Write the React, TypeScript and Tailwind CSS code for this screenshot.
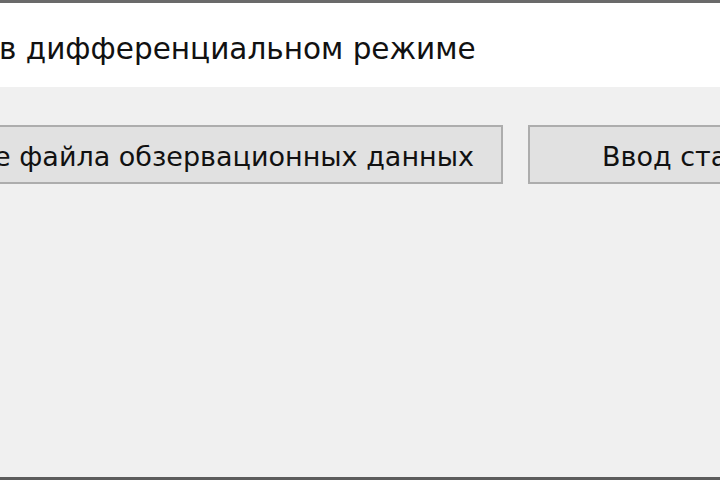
import React from "react";

export default function App() {
  const font = { fontFamily: '"DejaVu Sans", "Liberation Sans", sans-serif' };
  return (
    <div className="w-[720px] h-[480px] overflow-hidden bg-[#f0f0f0] flex flex-col" style={font}>
      <div className="h-[3px] bg-[#6a6a6a] shrink-0" />
      <div className="h-[84px] bg-white shrink-0 flex items-center">
        <span className="text-[29.5px] leading-none text-[#111] whitespace-nowrap ml-[-1px] mt-[10px]">
          в дифференциальном режиме
        </span>
      </div>
      <div className="flex-1 flex flex-col">
        <div className="flex gap-[25px] mt-[38px] h-[59px]">
          <div className="ml-[-3px] w-[506px] shrink-0 border-2 border-[#adadad] bg-[#e1e1e1] flex items-center justify-end pr-[27px] pt-[4px]">
            <span className="text-[27px] leading-none text-[#111] whitespace-nowrap">е файла обзервационных данных</span>
          </div>
          <div className="w-[400px] shrink-0 border-2 border-[#adadad] bg-[#e1e1e1] flex items-center pl-[72px] pt-[4px]">
            <span className="text-[27px] leading-none text-[#111] whitespace-nowrap">Ввод станционных данных</span>
          </div>
        </div>
        <div className="flex-1" />
        <div className="h-[3px] bg-[#5c5c5c] shrink-0" />
      </div>
    </div>
  );
}
